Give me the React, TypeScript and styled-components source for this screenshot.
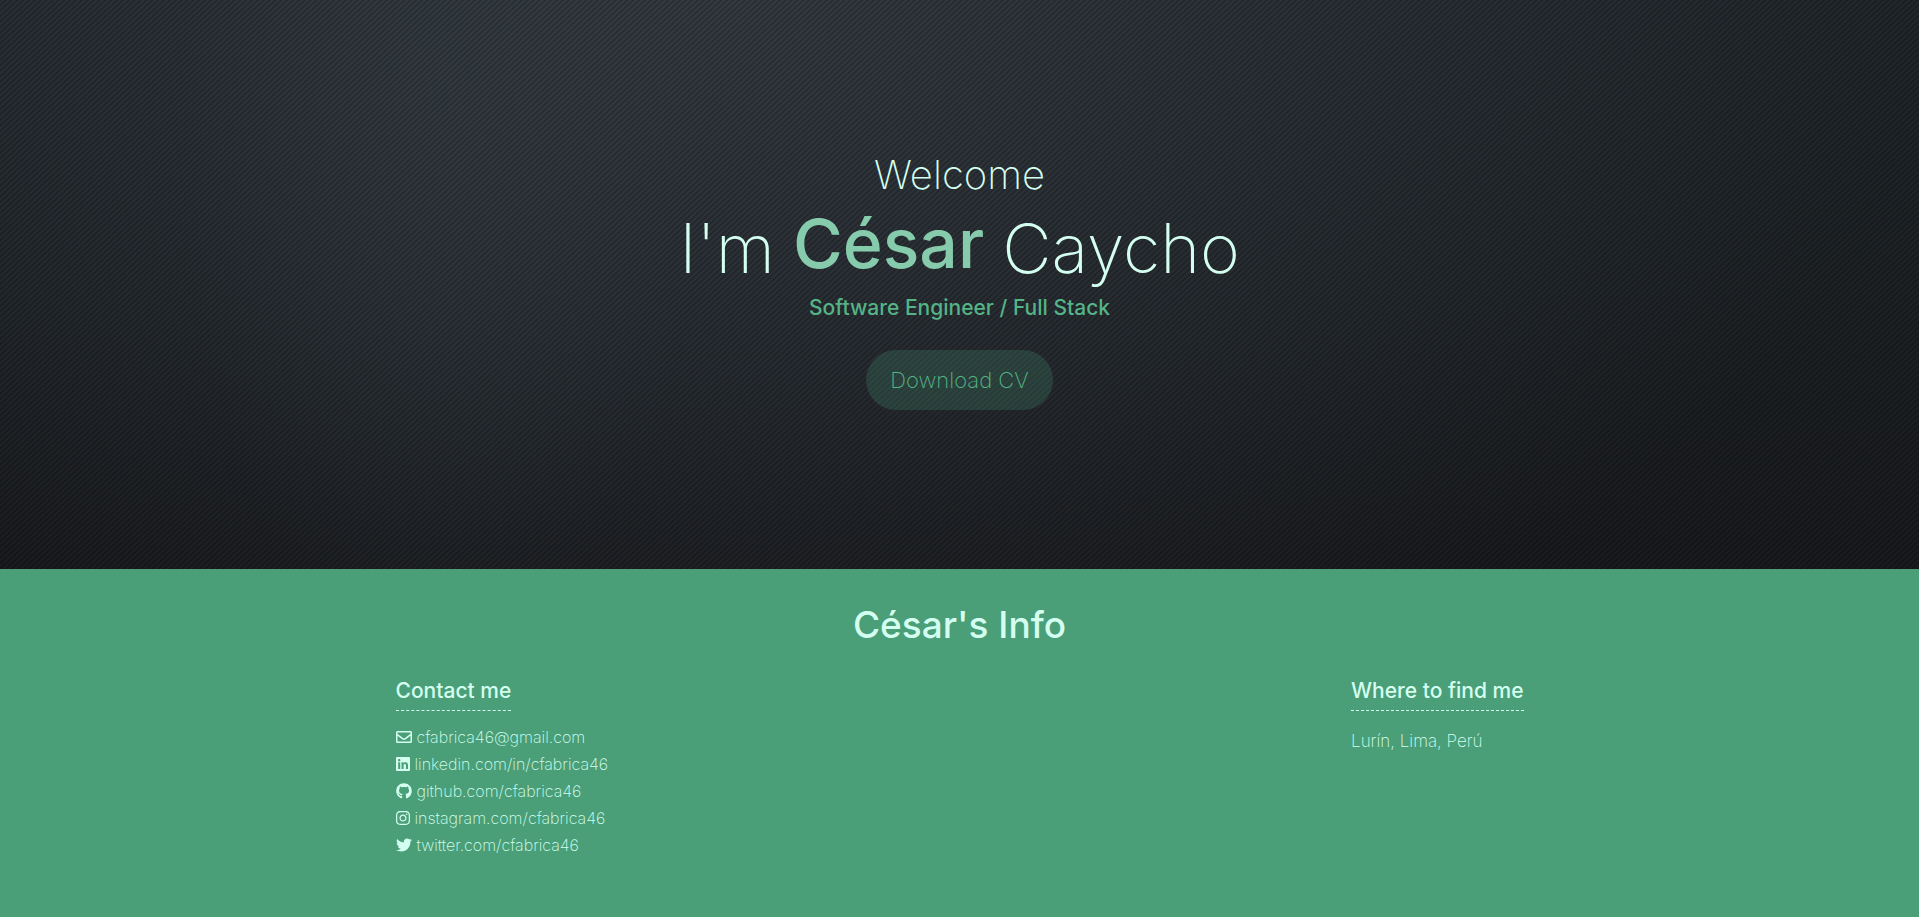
import React from "react";
import styled, { createGlobalStyle } from "styled-components";
import {
  FaGithub,
  FaInstagram,
  FaLinkedin,
  FaRegEnvelope,
  FaTwitter,
} from "react-icons/fa";

const GlobalStyle = createGlobalStyle`
  *, *::before, *::after { box-sizing: border-box; }
  body {
    margin: 0;
    background: #4a9e78;
    color: #d4fff0;
    font-family: Inter, "Liberation Sans", sans-serif;
    font-weight: 200;
  }
  h1, h2, h3, p, ul { margin: 0; padding: 0; font-weight: inherit; }
`;

const Page = styled.div`
  min-height: 100vh;
  display: flex;
  flex-direction: column;
`;

const Hero = styled.header`
  min-height: 62vh;
  display: flex;
  flex-direction: column;
  align-items: center;
  justify-content: center;
  padding-bottom: 8px;
  text-align: center;
  background:
    repeating-linear-gradient(
      137deg,
      rgba(0, 0, 0, 0.24) 0,
      rgba(255, 255, 255, 0.02) 2px,
      rgba(0, 0, 0, 0.24) 4px
    ),
    radial-gradient(ellipse 14% 100% at 23% 16%, rgba(58, 70, 76, 0.3), transparent),
    radial-gradient(ellipse 62% 130% at 38% 0%, rgba(60, 68, 78, 0.65), transparent),
    linear-gradient(180deg, #1f2529 0%, #1b1f22 55%, #17181b 100%);
`;

const Greeting = styled.p`
  font-size: 40px;
  line-height: 50px;
`;

const Name = styled.h1`
  display: flex;
  align-items: center;
  gap: 18px;
  font-size: 68px;
  line-height: 86px;
`;

const FirstName = styled.strong`
  padding-bottom: 10px;
  font-weight: 500;
  color: #86cbac;
`;

const Role = styled.p`
  font-size: 21px;
  line-height: 24px;
  font-weight: 500;
  color: #54b487;
`;

const DownloadButton = styled.button`
  margin-top: 30px;
  height: 60px;
  padding: 0 24px;
  border: 0;
  border-radius: 30px;
  background: rgba(75, 159, 121, 0.22);
  color: #54b487;
  font: inherit;
  font-size: 22px;
  cursor: pointer;
`;

const Info = styled.section`
  flex: 1;
  display: flex;
  flex-direction: column;
  align-items: center;
  padding: 32px 20px;
`;

const InfoTitle = styled.h2`
  font-size: 37px;
  line-height: 48px;
  font-weight: 500;
`;

const Columns = styled.div`
  display: flex;
  justify-content: space-between;
  width: 100%;
  max-width: 1128px;
  margin-top: 27px;
`;

const Column = styled.div`
  display: flex;
  flex-direction: column;
  align-items: flex-start;
`;

const ColumnTitle = styled.h3`
  padding-bottom: 4px;
  border-bottom: 1px dashed #d4fff0;
  font-size: 21px;
  line-height: 30px;
  font-weight: 500;
`;

const ContactList = styled.ul`
  margin-top: 13px;
  list-style: none;
`;

const ContactLink = styled.a<{ $iconWidth: number }>`
  display: flex;
  align-items: center;
  gap: 5px;
  color: inherit;
  font-size: 16px;
  line-height: 27px;
  text-decoration: none;

  svg {
    width: ${({ $iconWidth }) => $iconWidth}px;
    height: 16px;
  }
`;

const Place = styled.p`
  margin-top: 17px;
  font-size: 17px;
  line-height: 26px;
`;

const contacts = [
  { icon: FaRegEnvelope, iconWidth: 16, label: "cfabrica46@gmail.com", href: "mailto:cfabrica46@gmail.com" },
  { icon: FaLinkedin, iconWidth: 14, label: "linkedin.com/in/cfabrica46", href: "#linkedin" },
  { icon: FaGithub, iconWidth: 16, label: "github.com/cfabrica46", href: "#github" },
  { icon: FaInstagram, iconWidth: 14, label: "instagram.com/cfabrica46", href: "#instagram" },
  { icon: FaTwitter, iconWidth: 16, label: "twitter.com/cfabrica46", href: "#twitter" },
];

export default function App() {
  return (
    <Page>
      <GlobalStyle />
      <Hero>
        <Greeting>Welcome</Greeting>
        <Name>
          <span>I'm</span>
          <FirstName>César</FirstName>
          <span>Caycho</span>
        </Name>
        <Role>Software Engineer / Full Stack</Role>
        <DownloadButton type="button">Download CV</DownloadButton>
      </Hero>
      <Info>
        <InfoTitle>César's Info</InfoTitle>
        <Columns>
          <Column>
            <ColumnTitle>Contact me</ColumnTitle>
            <ContactList>
              {contacts.map(({ icon: Icon, iconWidth, label, href }) => (
                <li key={label}>
                  <ContactLink href={href} $iconWidth={iconWidth}>
                    <Icon aria-hidden />
                    {label}
                  </ContactLink>
                </li>
              ))}
            </ContactList>
          </Column>
          <Column>
            <ColumnTitle>Where to find me</ColumnTitle>
            <Place>Lurín, Lima, Perú</Place>
          </Column>
        </Columns>
      </Info>
    </Page>
  );
}
